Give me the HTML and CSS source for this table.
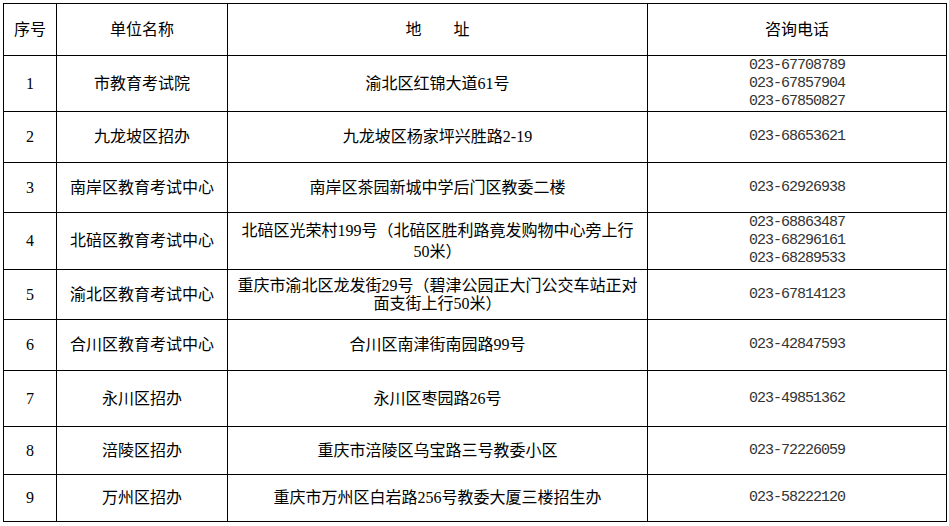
FILE: index.html
```html
<!DOCTYPE html>
<html lang="zh-CN">
<head>
<meta charset="utf-8">
<title>咨询电话</title>
<link rel="stylesheet" href="styles.css">
</head>
<body>
<table class="grid">
  <colgroup>
    <col class="c-no">
    <col class="c-unit">
    <col class="c-addr">
    <col class="c-tel">
  </colgroup>
  <thead>
    <tr class="head">
      <th>序号</th>
      <th>单位名称</th>
      <th>地　　址</th>
      <th>咨询电话</th>
    </tr>
  </thead>
  <tbody>
    <tr>
      <td>1</td>
      <td>市教育考试院</td>
      <td>渝北区红锦大道61号</td>
      <td class="tel"><div>023-67708789</div><div>023-67857904</div><div>023-67850827</div></td>
    </tr>
    <tr>
      <td>2</td>
      <td>九龙坡区招办</td>
      <td>九龙坡区杨家坪兴胜路2-19</td>
      <td class="tel">023-68653621</td>
    </tr>
    <tr>
      <td>3</td>
      <td>南岸区教育考试中心</td>
      <td>南岸区茶园新城中学后门区教委二楼</td>
      <td class="tel">023-62926938</td>
    </tr>
    <tr>
      <td>4</td>
      <td>北碚区教育考试中心</td>
      <td class="addr-wide">北碚区光荣村199号（北碚区胜利路竟发购物中心旁上行50米）</td>
      <td class="tel"><div>023-68863487</div><div>023-68296161</div><div>023-68289533</div></td>
    </tr>
    <tr>
      <td>5</td>
      <td>渝北区教育考试中心</td>
      <td class="addr-tight">重庆市渝北区龙发街29号（碧津公园正大门公交车站正对面支街上行50米）</td>
      <td class="tel">023-67814123</td>
    </tr>
    <tr>
      <td>6</td>
      <td>合川区教育考试中心</td>
      <td>合川区南津街南园路99号</td>
      <td class="tel">023-42847593</td>
    </tr>
    <tr>
      <td>7</td>
      <td>永川区招办</td>
      <td>永川区枣园路26号</td>
      <td class="tel">023-49851362</td>
    </tr>
    <tr>
      <td>8</td>
      <td>涪陵区招办</td>
      <td>重庆市涪陵区乌宝路三号教委小区</td>
      <td class="tel">023-72226059</td>
    </tr>
    <tr>
      <td>9</td>
      <td>万州区招办</td>
      <td>重庆市万州区白岩路256号教委大厦三楼招生办</td>
      <td class="tel">023-58222120</td>
    </tr>
  </tbody>
</table>
</body>
</html>
```

FILE: styles.css
```css
html, body {
  margin: 0;
  background: #ffffff;
}

body {
  padding: 3px 0 0 3px;
  font-family: "Liberation Serif", "Noto Sans CJK SC", serif;
  font-size: 16px;
  color: #000000;
}

.grid {
  border-collapse: collapse;
  table-layout: fixed;
  width: 943px;
}

.c-no { width: 53px; }
.c-unit { width: 171px; }
.c-addr { width: 420px; }
.c-tel { width: 299px; }

.grid th,
.grid td {
  border: 1px solid #000000;
  padding: 0 7px;
  text-align: center;
  vertical-align: middle;
  font-weight: normal;
  line-height: 20px;
}

.head th { height: 51px; }

tbody tr:nth-child(1) td { height: 55px; }
tbody tr:nth-child(2) td { height: 50px; }
tbody tr:nth-child(3) td { height: 49px; }
tbody tr:nth-child(4) td { height: 56px; }
tbody tr:nth-child(5) td { height: 49px; }
tbody tr:nth-child(6) td { height: 50px; }
tbody tr:nth-child(7) td { height: 55px; }
tbody tr:nth-child(8) td { height: 47px; }
tbody tr:nth-child(9) td { height: 46px; }

.grid .tel {
  font-family: "Liberation Mono", "Noto Sans CJK SC", monospace;
  font-size: 15px;
  letter-spacing: -1px;
  line-height: 18px;
  color: #333333;
}

.grid .addr-wide { line-height: 21px; }
.grid .addr-tight { line-height: 18px; }
```
